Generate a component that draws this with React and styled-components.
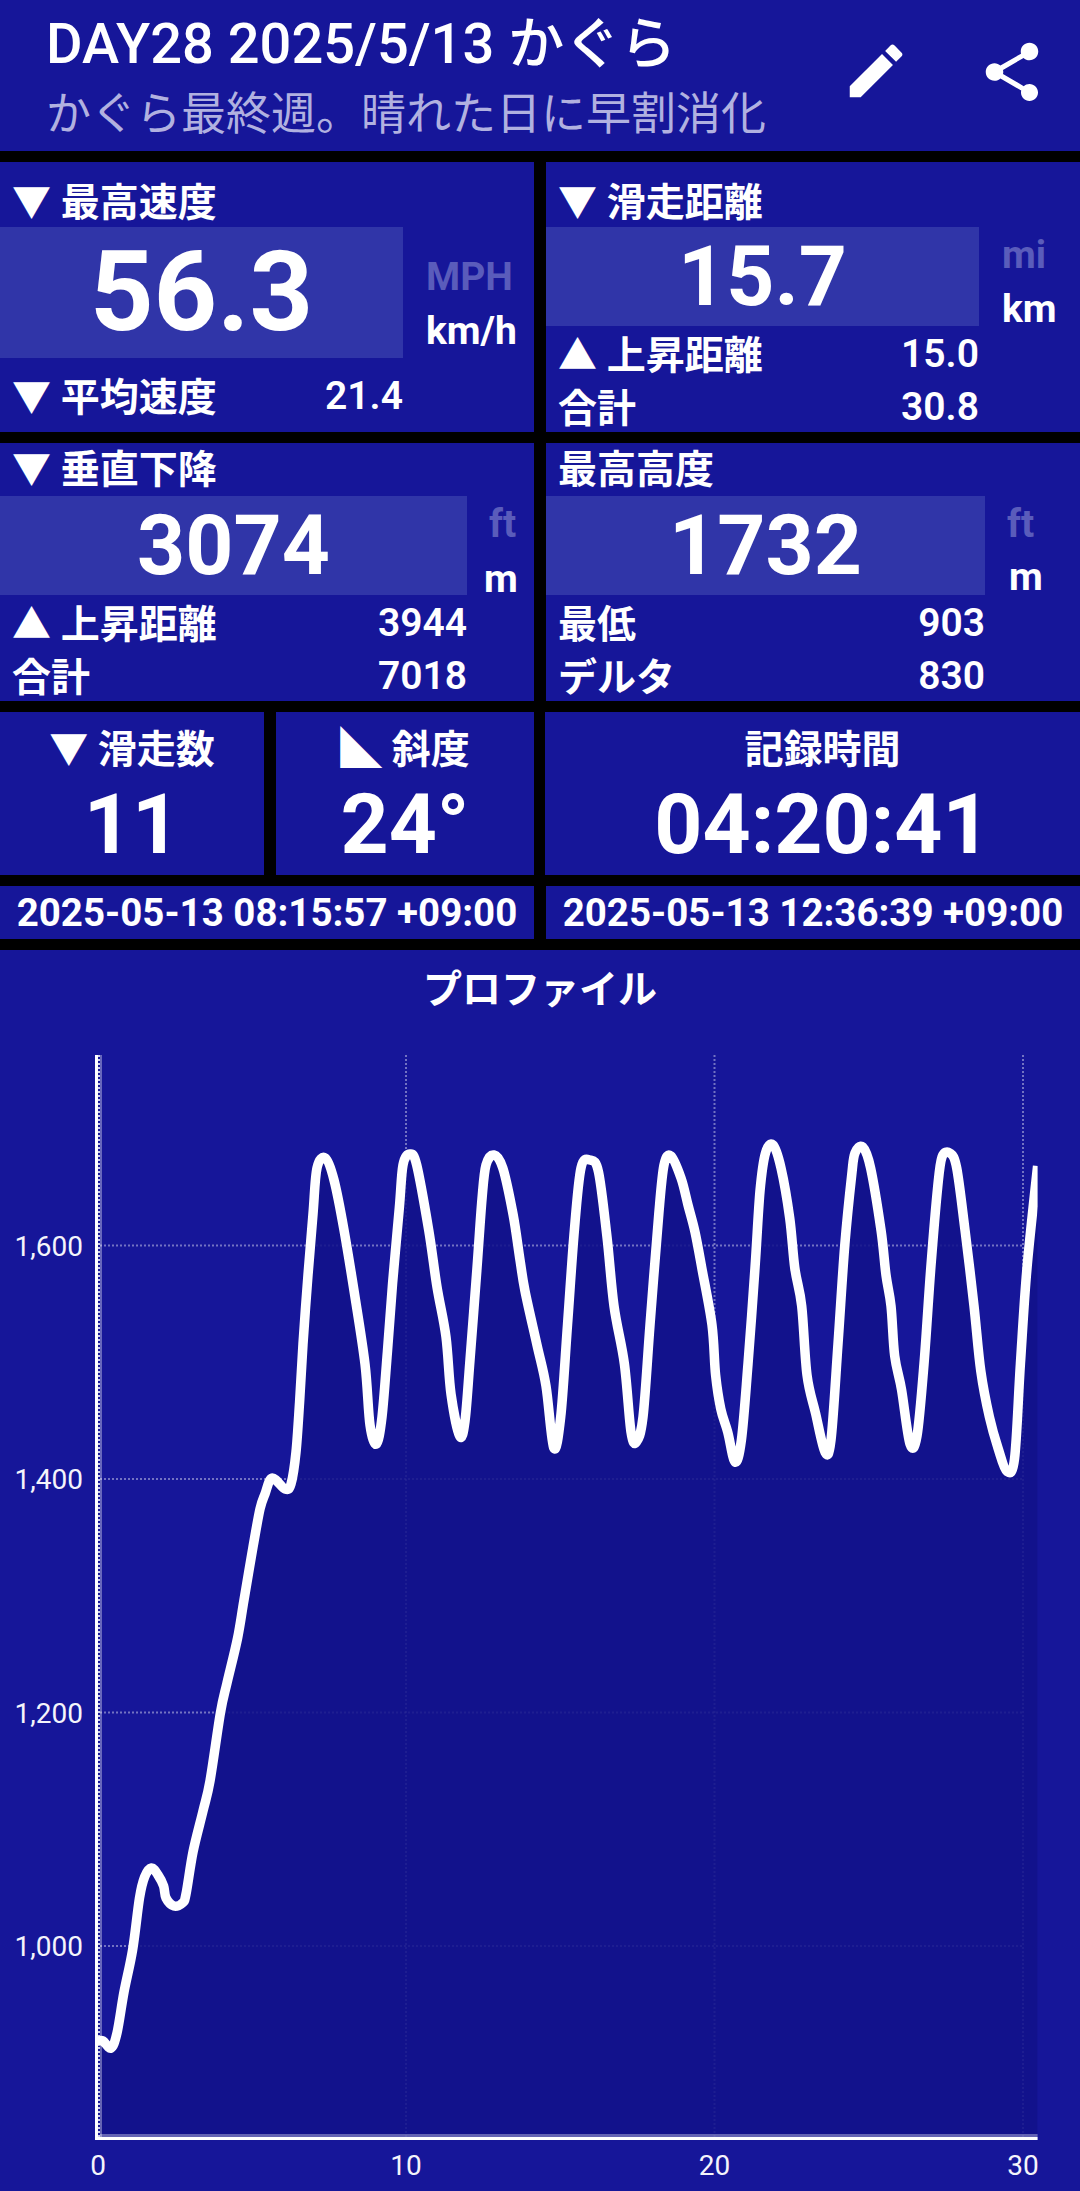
import React from "react";
import styled, { createGlobalStyle } from "styled-components";
import { MdEdit, MdShare } from "react-icons/md";

const BG = "#161699";
const HL = "#3035a8";

const Global = createGlobalStyle`
  html, body { margin: 0; padding: 0; background: #000; }
  body { font-family: Roboto, "Noto Sans CJK JP", sans-serif; color: #fff; }
`;

const Page = styled.div`
  width: 1080px;
  height: 2191px;
  background: #000;
  display: flex;
  flex-direction: column;
  overflow: hidden;
`;

const Header = styled.header`
  height: 151px;
  background: ${BG};
  display: flex;
  align-items: flex-start;
  padding-left: 46px;
  box-sizing: border-box;
`;
const HeaderText = styled.div`
  flex: 1;
  padding-top: 12px;
`;
const Title = styled.div`
  font-size: 56px;
  font-weight: 500;
  line-height: 64px;
  white-space: nowrap;
`;
const Subtitle = styled.div`
  font-size: 45px;
  font-weight: 400;
  line-height: 60px;
  margin-top: 9px;
  color: #b1b1e0;
  white-space: nowrap;
`;
const IconButton = styled.button`
  width: 70px;
  height: 70px;
  padding: 0;
  border: 0;
  background: none;
  color: #fff;
  margin-top: ${p => p.$mt}px;
  margin-left: ${p => p.$ml}px;
  margin-right: ${p => p.$mr || 0}px;
  display: flex;
  svg { width: 70px; height: 70px; }
`;

const Columns = styled.div`
  display: grid;
  grid-template-columns: 534px 534px;
  column-gap: 12px;
  margin-top: 11px;
`;

const Card = styled.section`
  background: ${BG};
  height: ${p => p.$h}px;
  display: flex;
  flex-direction: column;
`;
const CardTitle = styled.div`
  height: ${p => p.$h}px;
  padding-left: 12px;
  font-size: 39px;
  font-weight: 700;
  line-height: ${p => p.$lh}px;
  display: flex;
  align-items: flex-end;
  white-space: pre;
`;
const HeroRow = styled.div`
  display: flex;
  height: ${p => p.$h}px;
`;
const Hero = styled.div`
  width: ${p => p.$w}px;
  height: 100%;
  background: ${HL};
  display: flex;
  align-items: center;
  justify-content: center;
  font-size: ${p => p.$size}px;
  font-weight: 700;
  line-height: 1;
`;
const Units = styled.div`
  display: flex;
  flex-direction: column;
  flex: 1;
  padding-top: ${p => p.$pt}px;
  gap: ${p => p.$gap || 0}px;
`;
const Unit = styled.div`
  font-size: 39px;
  line-height: 53px;
  font-weight: 700;
  margin-left: ${p => p.$ml}px;
  color: ${p => (p.$dim ? "#5a5cbb" : "#fff")};
`;
const MetricRow = styled.div`
  height: ${p => p.$h || 53}px;
  width: ${p => p.$w}px;
  padding: 0 0 2px 12px;
  box-sizing: border-box;
  display: flex;
  justify-content: space-between;
  align-items: center;
  font-size: 39px;
  font-weight: 700;
  white-space: pre;
`;
const MetricValue = styled.span`
  font-size: 39px;
  font-weight: 600;
  padding-top: 4px;
`;

const StatGrid = styled.div`
  margin-top: 11px;
  display: grid;
  grid-template-columns: 264px 270px 546px;
  height: 163px;
`;
const Stat = styled.section`
  background: ${BG};
  margin-left: ${p => p.$ml || 0}px;
  padding: 13px 0 0 ${p => p.$pl || 0}px;
  display: flex;
  flex-direction: column;
  align-items: center;
  box-sizing: border-box;
`;
const StatLabel = styled.div`
  font-size: 39px;
  font-weight: 700;
  line-height: 50px;
  white-space: pre;
`;
const SlopeGlyph = styled.span`
  font-size: 42px;
  line-height: 0;
`;
const StatValue = styled.div`
  font-size: 84px;
  font-weight: 700;
  line-height: 100px;
`;

const Stamp = styled.div`
  background: ${BG};
  height: 53px;
  display: flex;
  align-items: center;
  justify-content: center;
  font-size: 38.5px;
  font-weight: 700;
  white-space: nowrap;
`;

const ChartPanel = styled.section`
  margin-top: 11px;
  background: ${BG};
  flex: 1;
  display: flex;
  flex-direction: column;
`;
const ChartTitle = styled.div`
  height: 76px;
  text-align: center;
  font-size: 39px;
  font-weight: 700;
  line-height: 80px;
`;
const ChartSvg = styled.svg`
  display: block;
  width: 1080px;
  height: 1165px;
`;
const AxisText = styled.text`
  font-family: Roboto, sans-serif;
  font-size: 28px;
  fill: #f4f4fb;
`;

const PTS = [[98,2041],[103,2041],[111,2048],[117,2033],[124,1992],[132.6,1950],[139.5,1898],[144.6,1877],[151.5,1868],[158,1875],[163.6,1886],[166,1898],[174,1906],[182.5,1903],[186,1894],[193,1852],[203,1811],[210,1781],[220.4,1713],[227,1683],[237.6,1638],[244,1600],[253,1547],[260,1509],[265,1494],[272,1478],[285,1489],[291,1484],[296,1452],[299.6,1402],[303,1344],[308,1275],[313,1214],[317,1168],[325.4,1158],[334,1180],[344,1230],[354.7,1295],[365,1364],[370,1425],[376.4,1444],[382,1417],[387.4,1352],[392.6,1283],[399.4,1207],[403,1165],[409.8,1154],[416.7,1165],[428.7,1230],[437,1287],[446,1337],[451,1394],[459.7,1436],[465,1421],[470,1360],[477,1268],[482,1199],[486,1165],[494,1155],[502.8,1168],[513,1214],[520,1260],[525,1291],[537,1345],[546,1386],[553.8,1448],[560.7,1417],[567.5,1325],[574.4,1230],[581,1168],[590,1160],[598.5,1172],[607,1237],[614,1306],[624.4,1364],[631,1432],[636.4,1442],[643,1417],[650,1325],[658.8,1214],[664,1165],[670.9,1156],[681,1178],[688,1205],[695,1232],[701.8,1268],[712,1325],[715.6,1375],[720.8,1409],[727.7,1432],[735,1462],[741.4,1440],[748,1364],[755,1268],[760,1191],[765.5,1153],[773,1145],[781,1168],[789.7,1218],[794.8,1268],[801.7,1306],[807,1375],[815.5,1413],[825,1452],[831,1440],[838,1344],[844.8,1245],[851.6,1176],[855,1153],[862.7,1147],[870.6,1168],[881,1230],[886,1275],[891,1306],[894.7,1356],[901.6,1390],[910,1444],[917,1436],[924,1364],[930.8,1268],[937.7,1187],[942,1157],[949.8,1153],[956.7,1168],[965,1230],[974,1306],[980.8,1371],[989.4,1417],[998,1448],[1006.6,1471],[1014.5,1459],[1020.4,1364],[1027,1268],[1037.6,1166]];

function smooth(pts) {
  let d = `M${pts[0][0]} ${pts[0][1]}`;
  for (let i = 0; i < pts.length - 1; i++) {
    const p0 = pts[i - 1] || pts[i];
    const p1 = pts[i];
    const p2 = pts[i + 1];
    const p3 = pts[i + 2] || p2;
    const c1x = p1[0] + (p2[0] - p0[0]) / 6;
    const c1y = p1[1] + (p2[1] - p0[1]) / 6;
    const c2x = p2[0] - (p3[0] - p1[0]) / 6;
    const c2y = p2[1] - (p3[1] - p1[1]) / 6;
    d += `C${c1x.toFixed(1)} ${c1y.toFixed(1)} ${c2x.toFixed(1)} ${c2y.toFixed(1)} ${p2[0]} ${p2[1]}`;
  }
  return d;
}
const LINE = smooth(PTS);
const YTICKS = [["1,600", 1245.5], ["1,400", 1479], ["1,200", 1712.5], ["1,000", 1946]];
const XTICKS = [["0", 98], ["10", 406], ["20", 714.5], ["30", 1023]];

function Chart() {
  return (
    <ChartSvg viewBox="0 1026 1080 1165">
      <defs>
        <clipPath id="plot"><rect x="98" y="1040" width="939.6" height="1100" /></clipPath>
      </defs>
      {YTICKS.map(([, y]) => (
        <line key={y} x1="100" x2="1023" y1={y} y2={y} stroke="#fff" strokeOpacity=".4" strokeWidth="2" strokeDasharray="2 2" />
      ))}
      {XTICKS.slice(1).map(([, x]) => (
        <line key={x} x1={x} x2={x} y1="1055" y2="2137" stroke="#fff" strokeOpacity=".4" strokeWidth="2" strokeDasharray="2 2" />
      ))}
      <path d={`${LINE}L1037.6 2137L100 2137L100 2041Z`} fill="#12128a" fillOpacity=".88" clipPath="url(#plot)" />
      <rect x="100" y="1055" width="2" height="1082" fill="#fff" fillOpacity=".35" />
      <rect x="100" y="2134" width="937.6" height="3" fill="#fff" fillOpacity=".35" />
      <rect x="95" y="1055" width="3" height="1085" fill="#fff" />
      <line x1="99" x2="99" y1="1055" y2="2137" stroke="#fff" strokeOpacity=".8" strokeWidth="2" strokeDasharray="2 2" />
      <rect x="98" y="2137" width="939.6" height="3" fill="#fff" />
      <path d={LINE} fill="none" stroke="#fff" strokeWidth="9.5" strokeLinejoin="round" clipPath="url(#plot)" />
      {YTICKS.map(([t, y]) => (
        <AxisText key={t} x="83" y={y + 10} textAnchor="end">{t}</AxisText>
      ))}
      {XTICKS.map(([t, x]) => (
        <AxisText key={t} x={x} y="2175" textAnchor="middle">{t}</AxisText>
      ))}
    </ChartSvg>
  );
}

export default function App() {
  return (
    <Page>
      <Global />
      <Header>
        <HeaderText>
          <Title>DAY28 2025/5/13 かぐら</Title>
          <Subtitle>かぐら最終週。晴れた日に早割消化</Subtitle>
        </HeaderText>
        <IconButton aria-label="編集" $mt={36} $ml={0}><MdEdit /></IconButton>
        <IconButton aria-label="共有" $mt={37} $ml={66} $mr={33}><MdShare /></IconButton>
      </Header>

      <Columns>
        <Card $h={270}>
          <CardTitle $h={65} $lh={48}>▼ 最高速度</CardTitle>
          <HeroRow $h={131}>
            <Hero $w={403} $size={111}>56.3</Hero>
            <Units $pt={24} $gap={1}>
              <Unit $ml={23} $dim>MPH</Unit>
              <Unit $ml={23}>km/h</Unit>
            </Units>
          </HeroRow>
          <MetricRow $w={403} $h={74}>▼ 平均速度<MetricValue>21.4</MetricValue></MetricRow>
        </Card>
        <Card $h={270}>
          <CardTitle $h={65} $lh={48}>▼ 滑走距離</CardTitle>
          <HeroRow $h={99}>
            <Hero $w={433} $size={84}>15.7</Hero>
            <Units $pt={2} $gap={1}>
              <Unit $ml={23} $dim>mi</Unit>
              <Unit $ml={23}>km</Unit>
            </Units>
          </HeroRow>
          <MetricRow $w={433}>▲ 上昇距離<MetricValue>15.0</MetricValue></MetricRow>
          <MetricRow $w={433}>合計<MetricValue>30.8</MetricValue></MetricRow>
        </Card>
      </Columns>

      <Columns>
        <Card $h={258}>
          <CardTitle $h={53} $lh={51}>▼ 垂直下降</CardTitle>
          <HeroRow $h={99}>
            <Hero $w={467} $size={84}>3074</Hero>
            <Units $pt={2} $gap={2}>
              <Unit $ml={22} $dim>ft</Unit>
              <Unit $ml={17}>m</Unit>
            </Units>
          </HeroRow>
          <MetricRow $w={467}>▲ 上昇距離<MetricValue>3944</MetricValue></MetricRow>
          <MetricRow $w={467}>合計<MetricValue>7018</MetricValue></MetricRow>
        </Card>
        <Card $h={258}>
          <CardTitle $h={53} $lh={51}>最高高度</CardTitle>
          <HeroRow $h={99}>
            <Hero $w={439} $size={84}>1732</Hero>
            <Units $pt={2}>
              <Unit $ml={22} $dim>ft</Unit>
              <Unit $ml={24}>m</Unit>
            </Units>
          </HeroRow>
          <MetricRow $w={439}>最低<MetricValue>903</MetricValue></MetricRow>
          <MetricRow $w={439}>デルタ<MetricValue>830</MetricValue></MetricRow>
        </Card>
      </Columns>

      <StatGrid>
        <Stat>
          <StatLabel>▼ 滑走数</StatLabel>
          <StatValue>11</StatValue>
        </Stat>
        <Stat $ml={12}>
          <StatLabel><SlopeGlyph>◣</SlopeGlyph> 斜度</StatLabel>
          <StatValue>24°</StatValue>
        </Stat>
        <Stat $ml={11} $pl={20}>
          <StatLabel>記録時間</StatLabel>
          <StatValue>04:20:41</StatValue>
        </Stat>
      </StatGrid>

      <Columns>
        <Stamp>2025-05-13 08:15:57 +09:00</Stamp>
        <Stamp>2025-05-13 12:36:39 +09:00</Stamp>
      </Columns>

      <ChartPanel>
        <ChartTitle>プロファイル</ChartTitle>
        <Chart />
      </ChartPanel>
    </Page>
  );
}
